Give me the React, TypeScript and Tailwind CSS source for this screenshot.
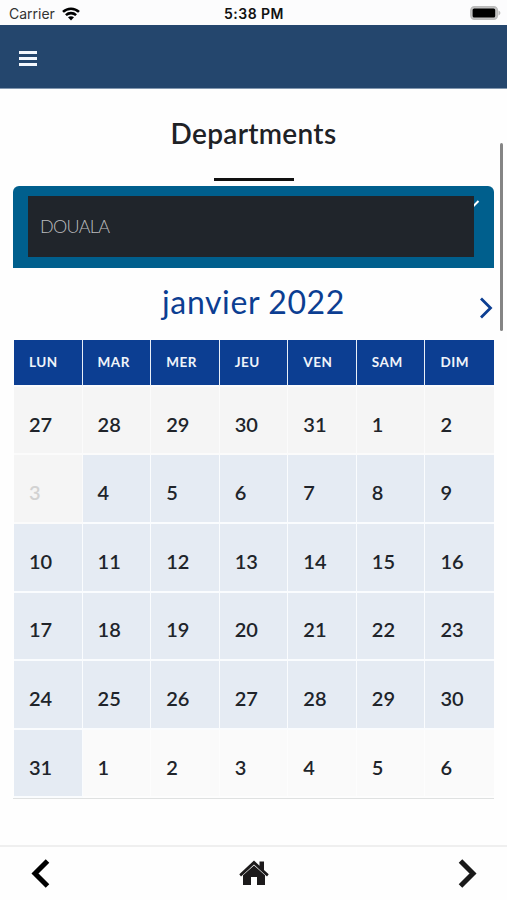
import React from "react";

const days = ["LUN", "MAR", "MER", "JEU", "VEN", "SAM", "DIM"];

const weeks = [
    [27, 28, 29, 30, 31, 1, 2],
    [3, 4, 5, 6, 7, 8, 9],
    [10, 11, 12, 13, 14, 15, 16],
    [17, 18, 19, 20, 21, 22, 23],
    [24, 25, 26, 27, 28, 29, 30],
    [31, 1, 2, 3, 4, 5, 6],
];

function StatusBar() {
    return (
        <div className="flex h-[25px] items-center bg-[#fcfcfd] font-['Inter',sans-serif]">
            <div className="flex w-[169px] items-center gap-[5px] pl-[9px] pt-[2px] text-[#333]">
                <span className="w-[48px] text-[14px]">Carrier</span>
                <svg width="18" height="14" viewBox="0 0 18 14" fill="none" stroke="#000" strokeWidth="2.6">
                    <path d="M1 4.9C5.5 0.6 12.5 0.6 17 4.9" />
                    <path d="M3.9 8.1C6.8 5.5 11.2 5.5 14.1 8.1" />
                    <path d="M6 10.3C7.7 8.9 10.3 8.9 12 10.3L9 13.4Z" fill="#000" stroke="none" />
                </svg>
            </div>
            <div className="w-[170px] pt-[2px] text-center text-[14px] font-semibold tracking-[0.45px] text-[#111]">5:38 PM</div>
            <div className="flex w-[168px] justify-end pr-[6px] pt-[1px]">
                <svg width="31" height="14" viewBox="0 0 31 14">
                    <rect x="0.8" y="0.8" width="26.6" height="12.4" rx="3.6" fill="#c4c4c4" stroke="#bbb" strokeWidth="1.4" />
                    <rect x="2.6" y="2.5" width="22.6" height="9" rx="1.6" fill="#000" />
                    <path d="M28.5 4.6C31 5.4 31 8.6 28.5 9.4Z" fill="#bbb" />
                </svg>
            </div>
        </div>
    )
}

function Department() {
    return (
        <div className="relative mx-[13px] h-[82px] rounded-t-[6px] bg-[#005f8d] pl-[15px] pt-[10px]">
            <svg className="absolute left-[453px] top-[13px]" width="14" height="10" fill="none" stroke="#fff" strokeWidth="2">
                <path d="M1 2.5L6.5 8L12.5 2" />
            </svg>
            <div className="relative flex h-[61px] w-[446px] items-center bg-[#20252b] pl-[12px] text-[18px] font-light tracking-[-0.7px] text-[#bcbdbf]">
                DOUALA
            </div>
        </div>
    )
}

function Calendar() {

    const cellColor = (row: number, col: number) => {
        if(row === 0 || (row === 1 && col === 0))
            return "bg-[#f5f5f5] border-[#fbfbfb]"
        if(row === 5 && col > 0)
            return "bg-[#fafafa] border-[#fdfdfd]"
        return "bg-[#e5ebf3] border-[#fafcfe]"
    }

    return (
        <div className="mx-[13px] border-b border-[#dfe1e1] pl-[1px]">
            <div className="grid h-[47px] grid-cols-7">
                {days.map((day) => (
                    <div key={day} className="flex items-center border-r border-b-2 border-r-[#e9eff8] border-b-[#fafbfd] bg-[#0c3e92] pb-[1px] pl-[15px] text-[13.5px] font-bold tracking-[0.5px] text-[#f0f4fa] last:border-r-0">
                        {day}
                    </div>
                ))}
            </div>
            {weeks.map((week, row) => (
                <div key={row} className="grid h-[68.6px] grid-cols-7">
                    {week.map((date, col) => (
                        <div key={col} className={"flex items-center border-r border-b-2 pl-[15px] pt-[7px] text-[20px] font-semibold last:border-r-0 " + cellColor(row, col) + (row === 1 && col === 0 ? " text-[#d2d2d2]" : " text-[#20242a]")}>
                            {date}
                        </div>
                    ))}
                </div>
            ))}
        </div>
    )
}

export default function App() {
    return (
        <div className="relative flex h-[900px] w-[507px] flex-col overflow-hidden bg-[#fefefe] font-['Lato',sans-serif]">
            <StatusBar />
            <div className="flex h-[64px] items-center border-b border-[#8297af] bg-[#24466d] pl-[19px] pt-[3px]">
                <div className="flex w-[18px] flex-col gap-[3px]">
                    <div className="h-[3px] bg-[#f3f7fd]"></div>
                    <div className="h-[3px] bg-[#f3f7fd]"></div>
                    <div className="h-[3px] bg-[#f3f7fd]"></div>
                </div>
            </div>

            <div className="flex h-[97.4px] flex-col items-center pt-[26px]">
                <h1 className="text-[28px] font-semibold leading-[36px] tracking-[0.3px] text-[#1e2226]">Departments</h1>
                <div className="mt-[27px] h-[3px] w-[80px] bg-[#111]"></div>
            </div>

            <Department />

            <div className="relative flex h-[71.4px] justify-center pt-[13px]">
                <h2 className="text-[32px] leading-[42px] tracking-[0.6px] text-[#0c3e92]">janvier 2022</h2>
                <svg className="absolute right-[14px] top-[29px]" width="14" height="22" fill="none" stroke="#0c3e92" strokeWidth="2.8">
                    <path d="M2 1.5L11.5 11L2 20.5" />
                </svg>
            </div>

            <Calendar />

            <div className="mt-auto flex h-[55px] items-center justify-between border-t-2 border-[#efefef] pb-[1px] pl-[31px] pr-[30px]">
                <svg width="19" height="29" fill="none" stroke="#000" strokeWidth="5">
                    <path d="M16.5 2L4 14.5L16.5 27" />
                </svg>
                <svg width="30" height="26" viewBox="0 0 30 26" fill="#1c1a1b">
                    <path d="M15 0.6L20.5 5.8V1.4H25V10L29.7 14.2L28 16.4L15 4.6L2 16.4L0.3 14.2Z" />
                    <path d="M15 5.4L26 15.3V25H18V17H12V25H4V15.3Z" />
                </svg>
                <svg width="19" height="29" fill="none" stroke="#1a1a1a" strokeWidth="5">
                    <path d="M2.5 2L15 14.5L2.5 27" />
                </svg>
            </div>

            {/* scroll indicator */}
            <div className="absolute left-[500px] top-[143px] h-[188px] w-[3px] rounded-full bg-[#858585]"></div>
        </div>
    )
}
